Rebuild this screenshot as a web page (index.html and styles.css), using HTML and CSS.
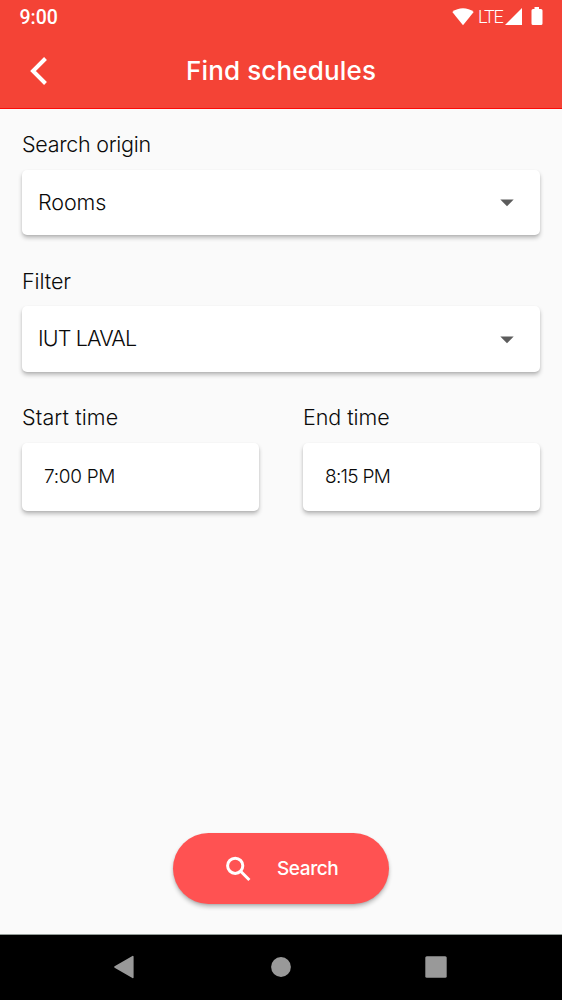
FILE: index.html
```html
<!DOCTYPE html>
<html lang="en">
<head>
<meta charset="utf-8">
<title>Find schedules</title>
<link rel="stylesheet" href="styles.css">
</head>
<body>
<div class="screen">
  <header class="top">
    <div class="status">
      <span class="clock">9:00</span>
      <svg class="wifi" width="22" height="18" viewBox="0 0 22 18"><path d="M.3 4C6.500-.9 15.500-.9 21.700 4L11 17.300Z" fill="#fff"/></svg>
      <span class="lte">LTE</span>
      <svg class="signal" width="17" height="17" viewBox="0 0 17 17"><path d="M17 0V17H0Z" fill="#fff"/></svg>
      <svg class="battery" width="12" height="19" viewBox="0 0 12 19"><path d="M3.500 0h4.500v2h2q1.500 0 1.500 1.500v13q0 1.500-1.500 1.500h-8q-1.500 0-1.500-1.500v-13q0-1.500 1.500-1.500h1.500z" fill="#fff"/></svg>
    </div>
    <div class="appbar">
      <svg class="back" width="18" height="28" viewBox="0 0 18 28"><path d="M15.500 1.500 3 14l12.500 12.500" fill="none" stroke="#fff" stroke-width="4"/></svg>
      <h1 class="title">Find schedules</h1>
    </div>
  </header>
  <main class="form">
    <label class="label origin">Search origin</label>
    <div class="card select"><span class="rooms">Rooms</span><svg width="14" height="8" viewBox="0 0 14 8"><path d="M.3.500h13.400L7 7.200z" fill="#5c5c5c"/></svg></div>
    <label class="label filter">Filter</label>
    <div class="card select"><span class="iut">IUT LAVAL</span><svg width="14" height="8" viewBox="0 0 14 8"><path d="M.3.500h13.400L7 7.200z" fill="#5c5c5c"/></svg></div>
    <div class="times">
      <div><label class="label start">Start time</label><div class="card time"><span class="t1">7:00 PM</span></div></div>
      <div><label class="label end">End time</label><div class="card time"><span class="t2">8:15 PM</span></div></div>
    </div>
    <button class="search">
      <svg width="26" height="26" viewBox="0 0 26 26" fill="none" stroke="#fff" stroke-width="3"><circle cx="10.200" cy="9.800" r="7.600"/><path d="M15.600 15.200 24.400 24"/></svg>
      <span>Search</span>
    </button>
  </main>
  <nav class="nav">
    <svg width="20" height="24" viewBox="0 0 20 24"><path d="M1 12 18.800 1.600V22.400Z" fill="#999" stroke="#999" stroke-width="1.600" stroke-linejoin="round"/></svg>
    <svg class="home" width="20" height="20" viewBox="0 0 20 20"><circle cx="10" cy="10" r="9.900" fill="#999"/></svg>
    <svg width="22" height="22" viewBox="0 0 22 22"><rect x=".3" y=".3" width="21.400" height="21.400" rx="1.500" fill="#999"/></svg>
  </nav>
</div>
</body>
</html>
```
FILE: styles.css
```css
* { box-sizing: border-box; }
body { margin: 0; font-family: Inter, Lato, sans-serif; }
svg { display: block; flex: none; }
.screen { width: 562px; height: 1000px; display: flex; flex-direction: column; background: #fafafa; overflow: hidden; }
.top { height: 109px; background: #f44336; border-bottom: 1px solid #fb0b08; color: #fff; }
.status { height: 34px; padding: 0 19px 0 19.500px; display: flex; align-items: center; font-family: Roboto, sans-serif; }
.clock { font-size: 19.500px; font-weight: 500; margin-right: auto; }
.lte { font-size: 18px; font-weight: 300; line-height: 20px; width: 24px; margin: -1px 3px 0 4px; letter-spacing: -1.200px; }
.signal { margin-top: -1px; }
.battery { margin: -1px 0 0 9px; }
.wifi { margin-top: 0; }
.appbar { height: 74px; display: grid; grid-template-columns: 48px 1fr 48px; align-items: center; }
.back { margin-left: 30px; }
.title { margin: 0; text-align: center; font-size: 26px; font-weight: 500; line-height: 32px; letter-spacing: .15px; }
.form { flex: 1; padding: 21px 22px 0; display: flex; flex-direction: column; color: #0a0a0a; }
.label { display: block; height: 28px; margin-bottom: 12px; font-size: 21.500px; line-height: 28px; font-weight: 300; white-space: nowrap; }
.origin { letter-spacing: -.28px; }
.filter { letter-spacing: -.1px; margin-bottom: 11px; }
.start { letter-spacing: .12px; }
.end { letter-spacing: -.05px; }
.card { background: #fff; border-radius: 5px; box-shadow: 0 3px 4px rgba(0,0,0,.24), 0 1px 2px rgba(0,0,0,.08); display: flex; align-items: center; white-space: nowrap; }
.select { height: 65px; margin-bottom: 32px; padding: 0 26px 0 16px; justify-content: space-between; font-size: 21.500px; font-weight: 300; }
.select span { padding-bottom: 2px; }
.filter + .select { height: 66px; margin-bottom: 31px; }
.filter + .select span { padding-bottom: 3px; }
.filter + .select svg { margin-top: 1px; }
.rooms { letter-spacing: -.1px; }
.iut { letter-spacing: -.85px; }
.t1 { letter-spacing: -.3px; }
.t2 { letter-spacing: -.7px; }
.times { display: grid; grid-template-columns: 1fr 1fr; gap: 44px; }
.time { height: 68px; padding: 0 22px 2px; font-size: 19px; font-weight: 300; }
.search { align-self: center; width: 216px; height: 71px; margin: auto 0 30px; padding: 0 0 0 52px; border: 0; border-radius: 36px; background: #ff5252; box-shadow: 0 3px 4px rgba(0,0,0,.24), 0 1px 2px rgba(0,0,0,.1); color: #fff; display: flex; align-items: center; gap: 26px; font: 500 19px Inter, sans-serif; letter-spacing: -.4px; }
.nav { height: 66px; background: #000; border-top: 1px solid #949d98; display: flex; justify-content: space-between; align-items: center; padding: 0 115px 1px 114px; }
.home { margin-left: 2px; }
```
